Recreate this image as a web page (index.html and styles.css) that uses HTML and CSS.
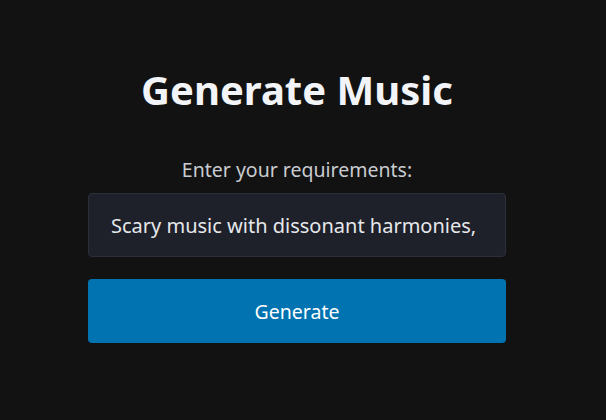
FILE: index.html
```html
<!DOCTYPE html>
<html>
<head>
<meta charset="utf-8">
<link rel="stylesheet" href="styles.css">
</head>
<body>
<main class="page">
  <h1 class="title">Generate Music</h1>
  <label class="label" for="req">Enter your requirements:</label>
  <input class="field" id="req" type="text" value="Scary music with dissonant harmonies, eerie sound effects">
  <button class="btn" type="button">Generate</button>
</main>
</body>
</html>
```

FILE: styles.css
```css
html, body {
  margin: 0;
  padding: 0;
  background: #121212;
  height: 100%;
}
body {
  font-family: "Noto Sans", "Noto Sans CJK KR", sans-serif;
  color: #f0f2f5;
}
.page {
  width: 594px;
  display: flex;
  flex-direction: column;
  align-items: center;
  padding-top: 60px;
}
.title {
  margin: 0;
  font-size: 40px;
  font-weight: 700;
  line-height: 60px;
  color: #f2f4f7;
}
.label {
  margin-top: 38px;
  font-size: 19.5px;
  line-height: 24px;
  color: #c9ccd1;
}
.field {
  margin-top: 11px;
  box-sizing: border-box;
  width: 418px;
  height: 64px;
  padding: 0 30px 0 22px;
  background: #1e202a;
  border: 1px solid #2c2f3a;
  border-radius: 4px;
  color: #e6e8eb;
  font-family: inherit;
  font-size: 20px;
  outline: none;
}
.btn {
  margin-top: 22px;
  width: 418px;
  height: 64px;
  border: none;
  border-radius: 4px;
  background: #0073b0;
  color: #ffffff;
  font-family: inherit;
  font-size: 19.5px;
  cursor: pointer;
}
```
